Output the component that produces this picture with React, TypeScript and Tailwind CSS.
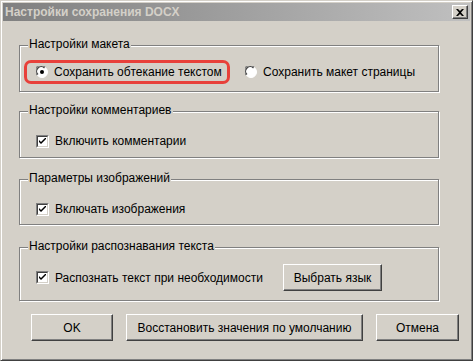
import React from 'react'

const font = { fontFamily: '"Liberation Sans", Arial, sans-serif' }

function Group({ title, h, mt, children }: { title: string; h: number; mt: number; children: React.ReactNode }) {
  return (
    <div
      className="relative ml-[16px] w-[420px] border border-[#808080] shadow-[inset_1px_1px_0_#fff,1px_1px_0_#fff]"
      style={{ height: h, marginTop: mt }}
    >
      <span className="absolute left-[8px] top-[-9px] bg-[#d4d0c8] px-[1px] text-[12px] leading-[15px] text-black">
        {title}
      </span>
      {children}
    </div>
  )
}

function Check() {
  return (
    <span className="flex h-[13px] w-[13px] shrink-0 items-center justify-center border border-t-[#808080] border-l-[#808080] border-r-white border-b-white">
      <span className="flex h-[11px] w-[11px] items-center justify-center border border-t-[#404040] border-l-[#404040] border-r-[#d4d0c8] border-b-[#d4d0c8] bg-white">
        <svg width="7" height="7" viewBox="0 0 7 7">
          <path d="M0 2 L0 4 L2 6 L7 1 L7 -1 L2 4 Z" fill="#000" />
        </svg>
      </span>
    </span>
  )
}

function Radio({ on }: { on?: boolean }) {
  return (
    <svg width="12" height="12" viewBox="0 0 12 12" className="shrink-0">
      <circle cx="6" cy="6" r="5.5" fill="#fff" stroke="#fff" />
      <path d="M1 9 A5.5 5.5 0 0 1 9 1" stroke="#808080" strokeWidth="1.2" fill="none" />
      <path d="M2 8.5 A4.5 4.5 0 0 1 8.5 2" stroke="#404040" strokeWidth="1.2" fill="none" />
      {on && <circle cx="6" cy="6" r="2" fill="#000" />}
    </svg>
  )
}

function Btn({ w, children }: { w: number; children: React.ReactNode }) {
  return (
    <button
      className="flex h-[27px] items-center justify-center border border-t-white border-l-white border-r-[#404040] border-b-[#404040] bg-[#d4d0c8] text-[12px] text-black shadow-[inset_-1px_-1px_0_#808080]"
      style={{ width: w }}
    >
      {children}
    </button>
  )
}

export default function App() {
  return (
    <div
      className="flex h-[361px] w-[473px] flex-col border border-t-[#d4d0c8] border-l-[#d4d0c8] border-r-[#404040] border-b-[#404040] bg-[#d4d0c8] p-[2px] shadow-[inset_1px_1px_0_#fff,inset_-1px_-1px_0_#808080]"
      style={font}
    >
      <div className="flex h-[18px] items-center justify-between bg-gradient-to-r from-[#808080] to-[#c0c0c0] pl-[2px] pr-[2px]">
        <span className="text-[12px] font-bold text-[#d4d0c8]">Настройки сохранения DOCX</span>
        <span className="flex h-[14px] w-[16px] items-center justify-center border border-t-white border-l-white border-r-[#404040] border-b-[#404040] bg-[#d4d0c8] shadow-[inset_-1px_-1px_0_#808080]">
          <svg width="8" height="7" viewBox="0 0 8 7">
            <path d="M0 0 L2 0 L4 2 L6 0 L8 0 L5 3.5 L8 7 L6 7 L4 5 L2 7 L0 7 L3 3.5 Z" fill="#000" />
          </svg>
        </span>
      </div>

      <Group title="Настройки макета" h={47} mt={24}>
        <div className="flex items-center pt-[14px]">
          <div className="ml-[4px] flex h-[24px] w-[206px] items-center rounded-[7px] border-[3px] border-[#e8403a] pl-[9px]">
            <Radio on />
            <span className="ml-[6px] text-[12px] text-black">Сохранить обтекание текстом</span>
          </div>
          <div className="ml-[15px] flex items-center">
            <Radio />
            <span className="ml-[6px] text-[12px] text-black">Сохранить макет страницы</span>
          </div>
        </div>
      </Group>

      <Group title="Настройки комментариев" h={47} mt={19}>
        <div className="flex items-center pl-[16px] pt-[20px]">
          <Check />
          <span className="ml-[6px] text-[12px] text-black">Включить комментарии</span>
        </div>
      </Group>

      <Group title="Параметры изображений" h={46} mt={21}>
        <div className="flex items-center pl-[16px] pt-[20px]">
          <Check />
          <span className="ml-[6px] text-[12px] text-black">Включать изображения</span>
        </div>
      </Group>

      <Group title="Настройки распознавания текста" h={54} mt={22}>
        <div className="flex items-center pl-[16px] pt-[16px]">
          <Check />
          <span className="ml-[6px] text-[12px] text-black">Распознать текст при необходимости</span>
          <div className="ml-auto mr-[56px]">
            <Btn w={99}>Выбрать язык</Btn>
          </div>
        </div>
      </Group>

      <div className="ml-[28px] mt-[13px] flex gap-[13px]">
        <Btn w={82}>OK</Btn>
        <Btn w={237}>Восстановить значения по умолчанию</Btn>
        <Btn w={83}>Отмена</Btn>
      </div>
    </div>
  )
}
